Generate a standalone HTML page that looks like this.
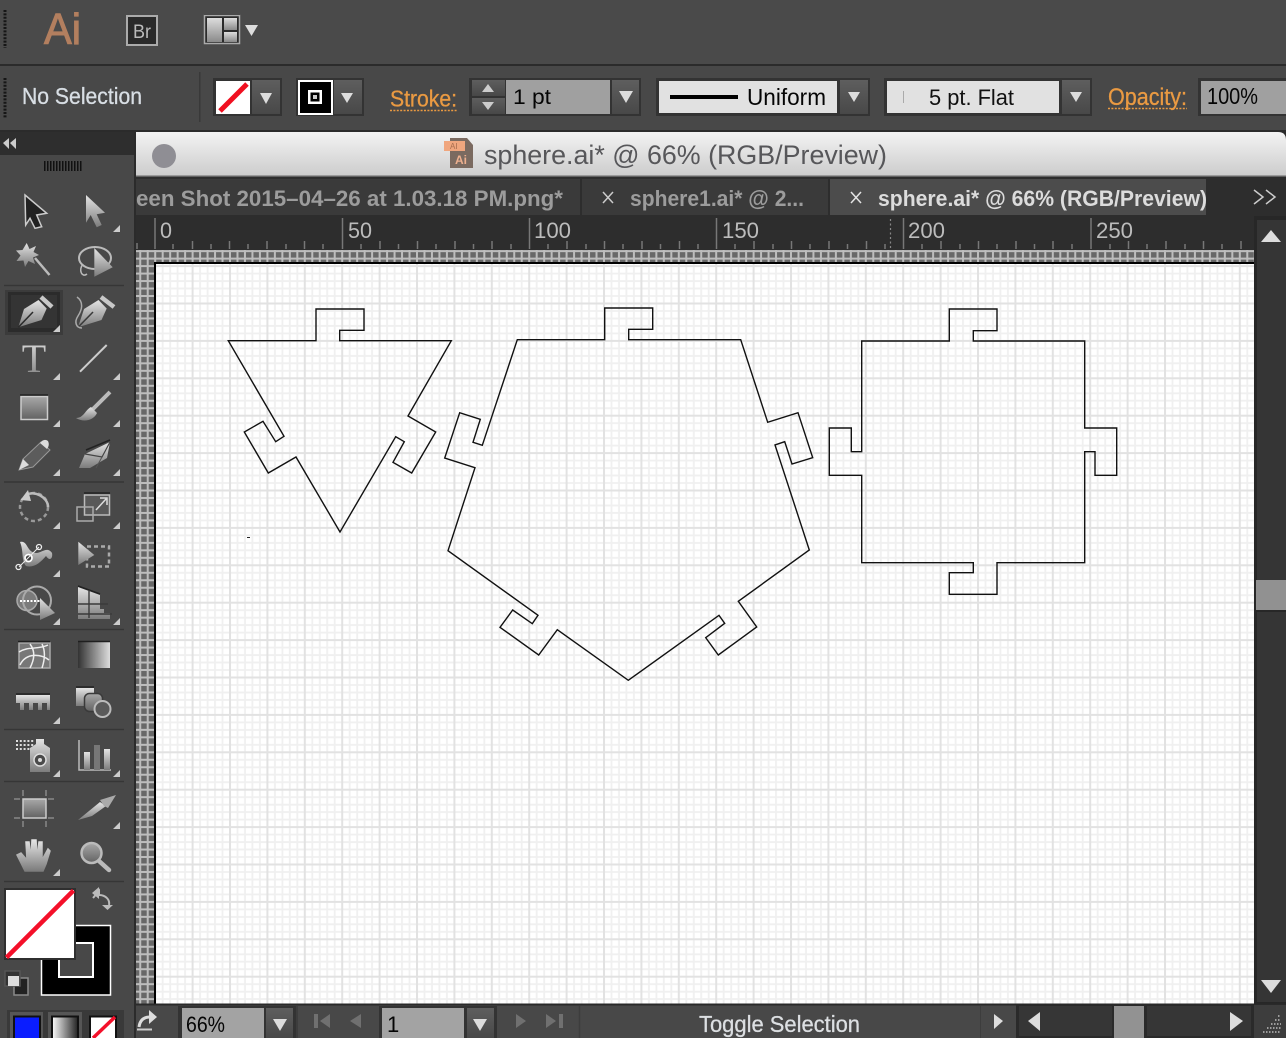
<!DOCTYPE html>
<html><head><meta charset="utf-8"><title>sphere.ai</title>
<style>
html,body{margin:0;padding:0;width:1286px;height:1038px;background:#484848;overflow:hidden}
svg{display:block}
text{font-family:"Liberation Sans",sans-serif}
.s{stroke-width:.3px}
</style></head><body>
<svg xmlns="http://www.w3.org/2000/svg" width="1286" height="1038" viewBox="0 0 1286 1038">
<defs>
<pattern id="grid" patternUnits="userSpaceOnUse" width="37.4" height="37.4" x="154.2" y="3.3">
<rect width="37.4" height="37.4" fill="#fff"/>
<g stroke="#f0f0f0" stroke-width="1.800" fill="none">
<path d="M8.500 0V37.4M16 0V37.4M23.400 0V37.4M30.900 0V37.4M0 8.500H37.4M0 16H37.4M0 23.400H37.4M0 30.900H37.4"/>
</g>
<path d="M1 0V37.4M0 1H37.4" stroke="#e2e2e2" stroke-width="2" fill="none"/>
</pattern>
<pattern id="chk" patternUnits="userSpaceOnUse" width="7.48" height="7.48" x="154.2" y="3.3">
<rect width="7.48" height="7.48" fill="#686868"/>
<path d="M1 0V7.48M0 1H7.48" stroke="#bdbdbd" stroke-width="2" fill="none"/>
</pattern>
<linearGradient id="ic" x1="0" y1="0" x2="0" y2="1"><stop offset="0" stop-color="#e4e4e4"/><stop offset="1" stop-color="#7c7c7c"/></linearGradient>
<linearGradient id="ic2" x1="0" y1="0" x2="0" y2="1"><stop offset="0" stop-color="#a8a8a8"/><stop offset="1" stop-color="#626262"/></linearGradient>
<linearGradient id="btn" x1="0" y1="0" x2="0" y2="1"><stop offset="0" stop-color="#5e5e5e"/><stop offset="1" stop-color="#484848"/></linearGradient>
<linearGradient id="title" x1="0" y1="0" x2="0" y2="1"><stop offset="0" stop-color="#f3f3f3"/><stop offset="1" stop-color="#cdcdcd"/></linearGradient>
<linearGradient id="hg" x1="0" y1="0" x2="1" y2="0"><stop offset="0" stop-color="#333"/><stop offset="1" stop-color="#ddd"/></linearGradient>
<linearGradient id="hg2" x1="0" y1="0" x2="1" y2="0"><stop offset="0" stop-color="#fff"/><stop offset="1" stop-color="#222"/></linearGradient>
<linearGradient id="lay" x1="0" y1="0" x2="0" y2="1"><stop offset="0" stop-color="#ddd"/><stop offset="1" stop-color="#8a8a8a"/></linearGradient>
</defs>

<!-- base -->
<rect width="1286" height="1038" fill="#484848"/>
<rect width="1286" height="65" fill="#4a4a4a"/>
<rect y="64" width="1286" height="2" fill="#2b2b2b"/>
<rect y="130" width="1286" height="2" fill="#2b2b2b"/>
<path d="M5 10V48M5 78V118" stroke="#161616" stroke-width="3" stroke-dasharray="2 1.4"/>

<!-- app bar -->
<text x="44" y="44" font-size="44" fill="#b37f5f" stroke="#b37f5f" stroke-width="1" textLength="37" lengthAdjust="spacingAndGlyphs">Ai</text>
<rect x="127" y="16" width="30" height="29" fill="#2a2a2a" stroke="#ababab" stroke-width="2"/>
<text x="133" y="38" font-size="19" fill="#bbb" textLength="18" lengthAdjust="spacingAndGlyphs">Br</text>
<rect x="204" y="14" width="36" height="30" fill="#2b2b2b"/>
<rect x="204.500" y="15.500" width="35" height="28" fill="none" stroke="#aaa" stroke-width="1.500"/>
<rect x="207" y="18" width="15" height="24" fill="url(#lay)"/>
<rect x="224" y="18" width="13" height="12" fill="url(#lay)"/>
<rect x="224" y="32" width="13" height="10" fill="url(#lay)"/>
<path d="M245 25H258L251.500 36Z" fill="#ddd"/>

<!-- control bar -->
<text x="22" y="104" font-size="23" fill="#d8dee4" stroke="#d8dee4" class="s" textLength="120" lengthAdjust="spacingAndGlyphs">No Selection</text>
<rect x="199" y="72" width="1.500" height="50" fill="#393939"/>

<rect x="213" y="78" width="69" height="38" fill="#333"/>
<rect x="216" y="81" width="34" height="33" fill="#fff"/>
<path d="M220 111L247 84" stroke="#f01020" stroke-width="5"/>
<rect x="252" y="80" width="28" height="34" fill="url(#btn)"/>
<path d="M260 93H272L266 104Z" fill="#ddd"/>

<rect x="296" y="78" width="68" height="38" fill="#333"/>
<rect x="299" y="81" width="33" height="33" fill="#000" stroke="#fff" stroke-width="2"/>
<rect x="309.250" y="91.250" width="11.500" height="11.500" fill="#000" stroke="#fff" stroke-width="2.500"/>
<rect x="313" y="95" width="4" height="4" fill="#ccc"/>
<rect x="334" y="80" width="28" height="34" fill="url(#btn)"/>
<path d="M341 93H353L347 103Z" fill="#ddd"/>

<text x="390" y="106.500" font-size="23" fill="#ea9a42" stroke="#ea9a42" class="s" textLength="67" lengthAdjust="spacingAndGlyphs">Stroke:</text>
<path d="M390 110.500H458" stroke="#ea9a42" stroke-width="1.500" stroke-dasharray="2 1.400"/>

<rect x="469" y="78" width="172" height="38" fill="#333"/>
<rect x="472" y="80" width="33" height="16" fill="url(#btn)"/>
<rect x="472" y="98" width="33" height="16" fill="url(#btn)"/>
<path d="M482 92L488 84L494 92ZM482 102H494L488 110Z" fill="#ccc"/>
<rect x="506" y="80" width="104" height="34" fill="#a0a0a0"/>
<text x="513" y="104" font-size="21" fill="#050505" textLength="38" lengthAdjust="spacingAndGlyphs">1 pt</text>
<rect x="612" y="80" width="27" height="34" fill="url(#btn)"/>
<path d="M619 91H633L626 103Z" fill="#ddd"/>

<rect x="656" y="78" width="214" height="38" fill="#333"/>
<rect x="659" y="81" width="178" height="32" fill="#e1e1e1"/>
<rect x="670" y="95" width="68" height="4" fill="#000"/>
<text x="747" y="105" font-size="23" fill="#050505" textLength="79" lengthAdjust="spacingAndGlyphs">Uniform</text>
<rect x="840" y="80" width="28" height="34" fill="url(#btn)"/>
<path d="M848 92H860L854 102Z" fill="#ddd"/>

<rect x="884" y="78" width="208" height="38" fill="#333"/>
<rect x="887" y="81" width="172" height="32" fill="#e1e1e1"/>
<rect x="903" y="91" width="1" height="12" fill="#aaa"/>
<text x="929" y="105" font-size="22" fill="#111" textLength="85" lengthAdjust="spacingAndGlyphs">5 pt. Flat</text>
<rect x="1062" y="80" width="28" height="34" fill="url(#btn)"/>
<path d="M1070 92H1082L1076 102Z" fill="#ddd"/>

<text x="1108" y="105" font-size="24" fill="#ea9a42" stroke="#ea9a42" class="s" textLength="79" lengthAdjust="spacingAndGlyphs">Opacity:</text>
<path d="M1108 108.500H1187" stroke="#ea9a42" stroke-width="1.500" stroke-dasharray="2 1.400"/>
<rect x="1198" y="78" width="88" height="38" fill="#333"/>
<rect x="1201" y="81" width="85" height="33" fill="#a0a0a0"/>
<text x="1207" y="104" font-size="23" fill="#050505" textLength="51" lengthAdjust="spacingAndGlyphs">100%</text>

<!-- title bar -->
<rect x="135" y="132" width="1151" height="906" fill="#2b2b2b"/>
<path d="M136 132H1278Q1286 132 1286 140V175H136Z" fill="url(#title)"/>
<rect x="136" y="175" width="1150" height="1.500" fill="#9a9a9a"/>
<circle cx="164" cy="156" r="12" fill="#8f8e94"/>
<path d="M450 138H467L473 145V168H450Z" fill="#7b6a60"/>
<rect x="444" y="141" width="21" height="10" fill="#f0a67e"/>
<text x="450" y="149" font-size="8" fill="#a76d4e">AI</text>
<text x="455" y="164" font-size="12" font-weight="bold" fill="#eeb08f">Ai</text>
<text x="484" y="164" font-size="27" fill="#57575a" textLength="403" lengthAdjust="spacingAndGlyphs">sphere.ai* @ 66% (RGB/Preview)</text>

<!-- tabs -->
<rect x="136" y="177" width="1150" height="40" fill="#2d2d2d"/>
<rect x="136" y="179" width="444" height="36" fill="#3a3a3a"/>
<rect x="582" y="179" width="246" height="36" fill="#3a3a3a"/>
<rect x="830" y="179" width="376" height="36" fill="#4c4c4c"/>
<text x="136" y="206" font-size="22" font-weight="bold" fill="#9c9c9c" textLength="427" lengthAdjust="spacingAndGlyphs">een Shot 2015–04–26 at 1.03.18 PM.png*</text>
<path d="M603 192L613 203M613 192L603 203" stroke="#ccc" stroke-width="1.500"/>
<text x="630" y="206" font-size="22" font-weight="bold" fill="#9c9c9c" textLength="174" lengthAdjust="spacingAndGlyphs">sphere1.ai* @ 2...</text>
<path d="M851 192L861 203M861 192L851 203" stroke="#e4e4e4" stroke-width="1.500"/>
<text x="878" y="206" font-size="22" font-weight="bold" fill="#dcdcdc" textLength="329" lengthAdjust="spacingAndGlyphs">sphere.ai* @ 66% (RGB/Preview)</text>
<path d="M1254 190L1263 197L1254 204M1266 190L1275 197L1266 204" fill="none" stroke="#ccc" stroke-width="1.500"/>

<!-- ruler -->
<rect x="136" y="217" width="1118" height="33" fill="#2d2d2d"/>
<path stroke="#777" stroke-width="1.500" fill="none" d="M155 218V249M342.500 218V249M529.500 218V249M716.500 218V249M903.500 218V249M1091 218V249
M137 243V249M173 244V249M192.500 241V249M211 244V249M229.500 241V249M248 244V249M267 241V249M286 244V249M304.500 241V249M323 244V249M361 244V249M380 241V249M398.500 244V249M417.500 241V249M436 244V249M455 241V249M473.500 244V249M492 241V249M511 244V249M548 244V249M567 241V249M586 244V249M604.500 241V249M623 244V249M642 241V249M660.500 244V249M679.500 241V249M698 244V249M735 244V249M754 241V249M773 244V249M791.500 241V249M810 244V249M829 241V249M847.500 244V249M866.500 241V249M885 244V249M922 244V249M941 241V249M960 244V249M978.500 241V249M997 244V249M1016 241V249M1034.500 244V249M1053 241V249M1072 244V249M1110 244V249M1128.500 241V249M1147 244V249M1166 241V249M1185 244V249M1203.500 241V249M1222 244V249M1241 241V249"/>
<path d="M890.500 219V248" stroke="#888" stroke-width="1.200" stroke-dasharray="2 2.500"/>
<g font-size="22" fill="#bcbcbc">
<text x="160" y="238" textLength="12" lengthAdjust="spacingAndGlyphs">0</text>
<text x="348" y="238" textLength="24" lengthAdjust="spacingAndGlyphs">50</text>
<text x="534" y="238" textLength="37" lengthAdjust="spacingAndGlyphs">100</text>
<text x="722" y="238" textLength="37" lengthAdjust="spacingAndGlyphs">150</text>
<text x="908" y="238" textLength="37" lengthAdjust="spacingAndGlyphs">200</text>
<text x="1096" y="238" textLength="37" lengthAdjust="spacingAndGlyphs">250</text>
</g>

<!-- strips -->
<rect x="136" y="250" width="1118" height="13" fill="url(#chk)"/>
<rect x="136" y="263" width="18" height="741" fill="url(#chk)"/>

<!-- canvas -->
<rect x="156" y="264" width="1098" height="741" fill="url(#grid)"/>
<rect x="154" y="262" width="1100" height="2" fill="#000"/>
<rect x="154" y="262" width="2" height="743" fill="#000"/>

<g fill="none" stroke="#111" stroke-width="1.400" stroke-linejoin="miter">
<path d="M316 340.700V309H364V330.300H339.700V340.700H451.300L408 416L435.700 432L411.700 473L393 462.300L404.300 441.700L395.700 436.700L340 532L296 457L268.300 473L244.300 432L263 421.300L275.700 441.700L284 436.300L228.300 340.700Z"/>
<path d="M604.700 339.700V308H652.700V329.300H628.700V339.700H740.700L767.700 422.300L798 412.700L812.700 457.700L792 464L784.700 441.700L775 445L809.300 550L738.300 601.300L756.700 627L718.300 655L705.700 637.700L724.700 623.300L719 615.300L628.300 680.300L557.300 629.700L538.700 655L500 627.300L512.700 610L532.300 623.700L538 615.300L448 550.700L475 467.700L444.700 458L459.700 412.700L480.300 419.300L473 442.300L482.300 445.300L517.300 339.700Z"/>
<path d="M949.300 341V309H997V330.700H973.300V341H1084.700V428H1116.700V475.300H1095V451.700H1084.700V562.700H997V594.300H949.300V572.700H973.300V562.700H861.700V475.300H829.300V428H851.300V451.700H861.700V341Z"/>
</g>
<rect x="247" y="537" width="3" height="1" fill="#222"/>

<!-- vertical scrollbar -->
<rect x="1254" y="216" width="32" height="789" fill="#272727"/>
<rect x="1257" y="220" width="29" height="360" fill="#353535"/>
<rect x="1257" y="612" width="29" height="390" fill="#353535"/>
<rect x="1256" y="580" width="30" height="30" fill="#919191"/>
<path d="M1261 242L1271 230L1281 242Z" fill="#ddd"/>
<path d="M1261 980H1281L1271 993Z" fill="#ddd"/>

<!-- left panel -->
<rect x="0" y="132" width="135" height="24" fill="#2e2e2e"/>
<rect x="0" y="155" width="135" height="883" fill="#484848"/>
<rect x="134" y="132" width="2" height="906" fill="#2b2b2b"/>
<path d="M9 138L3 143L9 149ZM16 138L10 143L16 149Z" fill="#ccc"/>
<path d="M44 166H83" stroke="#111" stroke-width="10" stroke-dasharray="1.500 1.500"/>
<path d="M4 285.500H124M4 482H124M4 629.500H124M4 729.500H124M4 781.500H124M4 881.500H124" stroke="#363636" stroke-width="1.500"/>

<!-- small corner triangles -->
<path fill="#ccc" d="M120 225V232H113ZM60 325V332H53ZM60 373V380H53ZM120 373V380H113ZM60 420V427H53ZM120 420V427H113ZM60 469V476H53ZM120 469V476H113ZM60 522V529H53ZM120 522V529H113ZM60 570V577H53ZM60 618V625H53ZM120 618V625H113ZM60 717V724H53ZM60 770V777H53ZM120 770V777H113ZM120 822V829H113ZM60 869V876H53Z"/>

<!-- selection tools -->
<path d="M25 195L46.700 213.300L36.700 215L41.700 226.700L35 228.300L30 218.300L25.700 225Z" fill="#222" stroke="#ccc" stroke-width="1.500"/>
<path d="M86 195L105 212.700L96.700 214.300L101.700 225L96.700 227.300L90.700 215L86 222.700Z" fill="url(#ic)"/>
<path d="M26.700 243L29.500 249L36 246L33.500 252L39 255L33 257.500L35 264L28.500 261L25 267L23.500 260.500L16.500 261L20.500 255.500L16 250.500L22.500 250Z" fill="url(#ic)"/>
<path d="M35 258L49.500 275" stroke="#bbb" stroke-width="2.500"/>
<ellipse cx="95" cy="258" rx="16" ry="11" fill="none" stroke="#bbb" stroke-width="2"/>
<path d="M83 264C78 270 82 278 87 274" fill="none" stroke="#bbb" stroke-width="1.500"/>
<path d="M94.300 248L112.700 267.300L94.300 276.700Z" fill="url(#ic)"/>

<!-- pen -->
<rect x="5" y="290" width="58" height="45" fill="#3b3b3b"/>
<rect x="8" y="292" width="52" height="40" fill="#2b2b2b"/>
<rect x="11" y="295" width="46" height="33" fill="#343434"/>
<path d="M60 325V332H53Z" fill="#ccc"/>
<path d="M18.300 327.300L24 309L38.500 300L46.700 308.500L41.500 320Z" fill="url(#ic)"/>
<path d="M18.300 327.300L33 312" stroke="#2b2b2b" stroke-width="1.500"/>
<path d="M41 297L52 307" stroke="#c8c8c8" stroke-width="4.500"/>
<path d="M78 327.300L84 309L98.500 300L106.700 308.500L101.500 320Z" fill="url(#ic)"/>
<path d="M78 327.300L93 312" stroke="#3a3a3a" stroke-width="1.500"/>
<path d="M101 297L114 307" stroke="#c8c8c8" stroke-width="4.500"/>
<path d="M77 297C84 302 82 310 78 316C74 322 76 328 82 328" fill="none" stroke="#aaa" stroke-width="1.500"/>

<!-- type, line -->
<text x="34" y="372" text-anchor="middle" font-size="40" fill="url(#ic)" style="font-family:'Liberation Serif',serif">T</text>
<path d="M80 371.700L106.700 345" stroke="#ccc" stroke-width="2"/>

<!-- rect, brush -->
<rect x="21" y="396.500" width="26.500" height="23" fill="url(#ic2)" stroke="#ccc" stroke-width="1.500"/>
<path d="M20 395H48" stroke="#222" stroke-width="1.500"/>
<path d="M92 410L110 392" stroke="#bbb" stroke-width="4"/>
<path d="M76 418C84 418 85 410 91 407L97 413C94 420 84 423 76 418Z" fill="url(#ic)"/>

<!-- pencil, eraser -->
<path d="M19 470L23 459L41 442L50 450L33 467Z" fill="#5c5c5c" stroke="#999" stroke-width="1"/>
<path d="M19 470L23 459L29 465Z" fill="#ddd"/>
<path d="M40 443Q44 438 48 441Q50 445 47 449Z" fill="#ddd"/>
<path d="M79 468L85 454L110 442L107 458L90 468Z" fill="url(#ic)"/>
<path d="M85 454L102 457L110 442" fill="none" stroke="#444" stroke-width="1.200"/>
<path d="M102 457L96 468" stroke="#555" stroke-width="1"/>
<path d="M86 450L110 440" stroke="#222" stroke-width="1.500"/>

<!-- rotate, scale -->
<circle cx="34" cy="507" r="14" fill="none" stroke="#999" stroke-width="2.500" stroke-dasharray="4 3"/>
<path d="M26 495C34 490 48 497 48 507" fill="none" stroke="#bbb" stroke-width="2.500"/>
<path d="M20.500 500L28 490L31 501Z" fill="#ccc"/>
<rect x="84.500" y="495" width="25" height="20" fill="#595959" stroke="#bbb" stroke-width="1.500"/>
<path d="M84 493H110" stroke="#222" stroke-width="1.500"/>
<rect x="77" y="507" width="16" height="14" fill="none" stroke="#aaa" stroke-width="1.500"/>
<path d="M96 510L106 499M100 498H107V505" fill="none" stroke="#ddd" stroke-width="1.500"/>

<!-- warp, free transform -->
<path d="M20 542C28 540 26 552 36 553C42 553 47 546 52 553C53 558 50 562 46 556C40 563 34 568 26 566C21 560 24 552 20 542Z" fill="url(#ic)"/>
<circle cx="28.500" cy="558" r="3.500" fill="#444" stroke="#fff" stroke-width="1.700"/>
<circle cx="39" cy="547" r="2.500" fill="#444" stroke="#eee" stroke-width="1.300"/>
<circle cx="18.500" cy="567" r="2.500" fill="#444" stroke="#eee" stroke-width="1.300"/>
<path d="M19 567L39 547" stroke="#eee" stroke-width="1"/>
<rect x="87" y="546.500" width="22" height="20" fill="none" stroke="#aaa" stroke-width="2.500" stroke-dasharray="4 3"/>
<path d="M78.300 541.700L94.300 555L78.300 565Z" fill="url(#ic)"/>

<!-- shape builder, perspective -->
<circle cx="27" cy="600.500" r="10" fill="#7b7b7b" stroke="#aaa" stroke-width="1.500"/>
<circle cx="37" cy="600.500" r="14" fill="none" stroke="#aaa" stroke-width="2"/>
<path d="M20 601H42" stroke="#fff" stroke-width="2" stroke-dasharray="2 1.500"/>
<path d="M40 598L55 613L40 620Z" fill="url(#ic)"/>
<path d="M78 587L100 595V609H104V613H110V619H78Z" fill="url(#ic)"/>
<path d="M78 586L100 594" stroke="#222" stroke-width="1.500"/>
<path d="M78 604H108M89 590V618M78 614H112" stroke="#3a3a3a" stroke-width="1.400"/>

<!-- mesh, gradient -->
<rect x="19" y="643" width="31" height="25" fill="#777" stroke="#aaa" stroke-width="1.500"/>
<path d="M18 641.500H50" stroke="#1f1f1f" stroke-width="1.500"/>
<path d="M19 652C28 646 38 650 48 645M20 665C26 652 42 654 49 660M30 644C36 652 34 660 30 668M42 644C46 652 44 662 42 668" fill="none" stroke="#eee" stroke-width="1.500"/>
<rect x="78" y="642" width="32" height="26" fill="url(#hg)"/>
<path d="M78 641.500H110" stroke="#1f1f1f" stroke-width="1.500"/>

<!-- ruler, blend -->
<path d="M16 695H50V710H47V703H42V710H38V703H33V710H29V703H24V710H20V703H16Z" fill="url(#ic)"/>
<path d="M16 694H50" stroke="#222" stroke-width="1.500"/>
<rect x="76" y="688" width="18" height="18" fill="url(#ic)"/>
<path d="M76 687H94" stroke="#222" stroke-width="1.500"/>
<rect x="84.500" y="693.500" width="18" height="18" rx="5" fill="url(#ic2)" stroke="#3a3a3a" stroke-width="1.500"/>
<circle cx="102.500" cy="709" r="8" fill="#5a5a5a" stroke="#bbb" stroke-width="2"/>

<!-- symbol, graph -->
<path d="M16 741H34M16 745H34M16 749H34" stroke="#ddd" stroke-width="2" stroke-dasharray="2 1.800"/>
<path d="M36 739H44V744L50 748V772H30V748L36 744Z" fill="url(#ic)"/>
<circle cx="40" cy="760" r="6" fill="#4a4a4a" stroke="#ddd" stroke-width="1.500"/>
<circle cx="40" cy="760" r="2" fill="#ddd"/>
<path d="M79 740V770H111" fill="none" stroke="#bbb" stroke-width="1.500"/>
<rect x="84" y="752" width="6" height="18" fill="url(#ic)"/>
<rect x="94" y="745" width="6" height="25" fill="#777"/>
<rect x="104" y="749" width="6" height="21" fill="url(#ic)"/>

<!-- artboard, slice -->
<rect x="23" y="799" width="23" height="19" fill="url(#ic2)" stroke="#ccc" stroke-width="1.500"/>
<path d="M14 799H20M48 799H54M14 818H20M48 818H54M23 790V796M46 790V796M23 821V827M46 821V827" stroke="#888" stroke-width="1.500"/>
<path d="M78 820L100 802L106 806L92 816Z" fill="url(#ic)"/>
<path d="M100 800L116 795L108 808L104 806Z" fill="#aaa"/>

<!-- hand, zoom -->
<path d="M25 871L17 855L21 853L27 860L26 842H29L31 858L32 840H36L37 858L39 842H42L42 860L48 849L50 851L46 864L43 871Z" fill="url(#ic)" stroke="url(#ic)" stroke-width="1.500"/>
<circle cx="91.500" cy="853" r="10" fill="url(#ic2)" stroke="#bbb" stroke-width="2.500"/>
<path d="M99 861L109 870" stroke="#bbb" stroke-width="4.500" stroke-linecap="round"/>

<!-- fill / stroke -->
<rect x="41.500" y="925.500" width="69" height="69.500" fill="#000" stroke="#fff" stroke-width="1.500"/>
<rect x="59" y="943" width="34" height="34" fill="#484848" stroke="#fff" stroke-width="2"/>
<rect x="5" y="889" width="70" height="70" fill="#fff" stroke="#2f2f2f" stroke-width="2"/>
<path d="M6.500 957.500L73.500 890.500" stroke="#f4102a" stroke-width="4.500"/>
<path d="M93 898L99 891V895C106 895 110 900 109 905" fill="none" stroke="#bbb" stroke-width="2"/>
<path d="M102 905H113L107.500 910Z M92 893L99 887V899Z" fill="#bbb"/>
<rect x="14" y="978" width="14" height="17" fill="#222" stroke="#8a8a8a" stroke-width="1.500"/>
<rect x="5" y="971" width="15" height="15" fill="#333" stroke="#555" stroke-width="1.500"/>
<rect x="8" y="976" width="11" height="10" fill="#ddd"/>

<!-- swatches -->
<rect x="7" y="1010" width="117" height="28" fill="#393939"/>
<rect x="10" y="1012" width="33" height="26" fill="#565656"/>
<rect x="48" y="1012" width="34" height="26" fill="#565656"/>
<path d="M14 1038V1016.500H40V1038" fill="#0a1dff" stroke="#111" stroke-width="2"/>
<path d="M52 1038V1016.500H78V1038" fill="url(#hg2)" stroke="#111" stroke-width="2"/>
<path d="M90 1038V1016.500H116V1038" fill="#fff" stroke="#111" stroke-width="2"/>
<path d="M93 1038L115 1017" stroke="#f4102a" stroke-width="3.500"/>

<!-- bottom status bar -->
<rect x="136" y="1004" width="1150" height="34" fill="#484848"/>
<rect x="136" y="1003.500" width="1150" height="2" fill="#2a2a2a"/>
<path d="M137 1029.500H152" stroke="#ccc" stroke-width="2"/>
<path d="M139 1027C140 1020 144 1017 150 1017" fill="none" stroke="#ddd" stroke-width="3"/>
<path d="M149 1010L157 1017L149 1024Z" fill="#ddd"/>
<rect x="178" y="1006" width="118" height="32" fill="#333"/>
<rect x="182" y="1008" width="82" height="30" fill="#a3a3a3"/>
<text x="186" y="1032" font-size="22" fill="#050505" textLength="39" lengthAdjust="spacingAndGlyphs">66%</text>
<rect x="266" y="1008" width="27" height="30" fill="url(#btn)"/>
<path d="M273 1019H287L280 1031Z" fill="#ddd"/>
<path d="M297 1006V1038" stroke="#3d3d3d" stroke-width="2"/>
<path d="M314 1014H318V1028H314ZM330 1014V1028L320 1021ZM361 1014V1028L350 1021Z" fill="#707070"/>
<rect x="379" y="1006" width="118" height="32" fill="#333"/>
<rect x="382" y="1008" width="82" height="30" fill="#a3a3a3"/>
<text x="387" y="1032" font-size="22" fill="#050505">1</text>
<rect x="467" y="1008" width="27" height="30" fill="url(#btn)"/>
<path d="M473 1019H487L480 1031Z" fill="#ddd"/>
<path d="M516 1014L526 1021L516 1028ZM546 1014L556 1021L546 1028ZM559 1014H563V1028H559Z" fill="#707070"/>
<path d="M579.500 1006V1038" stroke="#3d3d3d" stroke-width="1.500"/>
<text x="699" y="1032" font-size="23" fill="#dcdfe2" stroke="#dcdfe2" class="s" textLength="161" lengthAdjust="spacingAndGlyphs">Toggle Selection</text>
<rect x="980" y="1006" width="1" height="32" fill="#3d3d3d"/>
<path d="M994 1014L1003 1021L994 1029Z" fill="#ddd"/>
<rect x="1016" y="1005" width="238" height="33" fill="#2a2a2a"/>
<rect x="1019" y="1006" width="93" height="30" fill="#363636"/>
<rect x="1147" y="1006" width="104" height="30" fill="#363636"/>
<rect x="1114" y="1006" width="30" height="32" fill="#929292"/>
<path d="M1040 1012V1031L1028 1021Z" fill="#ddd"/>
<path d="M1230 1012V1031L1243 1021Z" fill="#ddd"/>
<rect x="1254" y="1005" width="32" height="33" fill="#3d3d3d"/>
<path d="M1263 1032H1281M1267 1028H1281M1271 1024H1281M1275 1020H1281M1278 1016H1281" stroke="#bbb" stroke-width="1.500" stroke-dasharray="1.500 1.500"/>
</svg>
</body></html>
